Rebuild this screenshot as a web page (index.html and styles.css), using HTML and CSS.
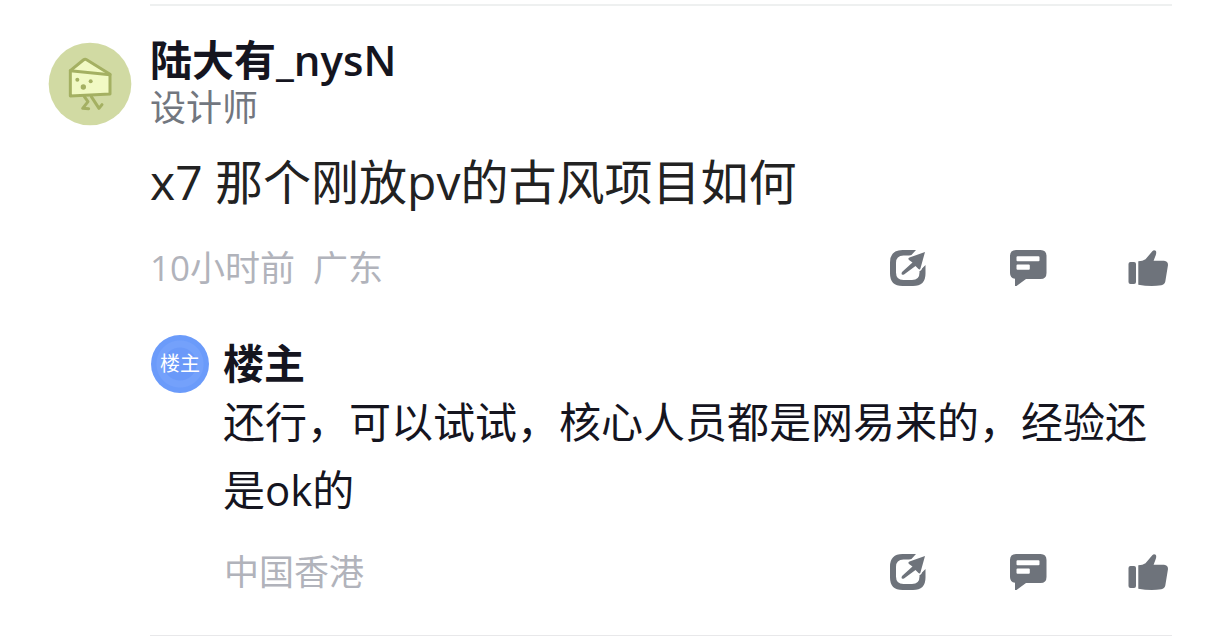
FILE: index.html
```
<!DOCTYPE html>
<html lang="zh-CN">
<head>
<meta charset="utf-8">
<meta name="viewport" content="width=device-width, initial-scale=1">
<title>评论</title>
<link rel="stylesheet" href="styles.css">
</head>
<body>

<!-- shared icons -->
<svg class="sprite" aria-hidden="true">
  <symbol id="icon-share" viewBox="0 0 40 40">
    <path d="M28 2 23 7.500H15.500Q8 7.500 8 15v9.500Q8 32 15.500 32H24q7.500 0 7.500-7.500V23l6-6v8.500Q37.500 38 25 38H14.500Q2 38 2 25.500V14.500Q2 2 14.500 2z" fill="currentColor"/>
    <path d="M37 4 21.500 9.500q-2 1-.5 2.500l3.500 2.500-10.500 9.500q-1.500 3.500 2 2.500l11.500-8.500 3 3q1.500 1.200 2-.8z" fill="currentColor" stroke="#fff" stroke-width="3" stroke-linejoin="round" paint-order="stroke"/>
  </symbol>
  <symbol id="icon-comment" viewBox="0 0 40 40">
    <path fill="currentColor" fill-rule="evenodd" d="M8 2h24.500q6 0 6 6v17q0 6-6 6H18l-9.500 7H7v-7.200Q2 30 2 25V8q0-6 6-6zm1.500 6.300q-1 0-1 1v3q0 1 1 1h21q1 0 1-1v-3q0-1-1-1zm0 8.200q-1 0-1 1v3.200q0 1 1 1h11.300q1 0 1-1v-3.200q0-1-1-1z"/>
  </symbol>
  <symbol id="icon-like" viewBox="0 0 40 40">
    <rect x="0.500" y="14" width="7.500" height="22" rx="2" fill="currentColor"/>
    <path fill="currentColor" d="M10.300 13.300q4.500 0 7.200-2l6.800-8Q26 1.300 27.700 2.800q1.300 1.700-.5 5.700l-1.600 4.200H36q4 .3 4 4.300L37.300 33.500q-.8 3.200-4 3.800-11 1.700-23-.6z"/>
  </symbol>
</svg>

<div class="comment">
  <svg class="avatar" viewBox="24 30 252 252" role="img" aria-label="陆大有_nysN">
    <circle cx="150" cy="156" r="124" fill="#d1daa3"/>
    <g stroke="#a4b062" stroke-width="9" stroke-linejoin="round" stroke-linecap="round">
      <path d="M91 116 130 84q5-4 10-1l70 44v59L91 192z" fill="#f1f9c4"/>
      <path d="M91 116l119 12" fill="none"/>
      <path d="M133 194l11 15-16 20 18 1M154 194l23 35 9-11" fill="none"/>
    </g>
    <g fill="#a4b062">
      <circle cx="112" cy="143" r="6"/>
      <circle cx="152" cy="148" r="6"/>
      <circle cx="130" cy="165" r="8"/>
    </g>
  </svg>
  <div class="comment-body">
    <div class="name">陆大有_nysN</div>
    <div class="job">设计师</div>
    <p class="text">x7 那个刚放pv的古风项目如何</p>
    <div class="meta">
      <span class="time">10小时前</span>
      <span class="place">广东</span>
      <div class="actions">
        <button type="button" aria-label="分享"><svg><use href="#icon-share"/></svg></button>
        <button type="button" aria-label="评论"><svg><use href="#icon-comment"/></svg></button>
        <button type="button" aria-label="点赞"><svg><use href="#icon-like"/></svg></button>
      </div>
    </div>

    <div class="reply">
      <div class="reply-avatar">楼主</div>
      <div class="reply-body">
        <div class="name reply-name">楼主</div>
        <p class="reply-text">还行，可以试试，核心人员都是网易来的，经验还是ok的</p>
      </div>
    </div>
    <div class="meta reply-meta">
      <span class="place">中国香港</span>
      <div class="actions">
        <button type="button" aria-label="分享"><svg><use href="#icon-share"/></svg></button>
        <button type="button" aria-label="评论"><svg><use href="#icon-comment"/></svg></button>
        <button type="button" aria-label="点赞"><svg><use href="#icon-like"/></svg></button>
      </div>
    </div>
  </div>
</div>

</body>
</html>
```
FILE: styles.css
```
* {
  box-sizing: border-box;
}

body {
  margin: 0;
  background-color: #fff;
  color: #15151f;
  font-family: "Open Sans", "Noto Sans CJK SC", sans-serif;
}

.sprite {
  display: none;
}

.comment {
  display: flex;
  gap: 18px;
  padding: 4px 48px 0;
}

.avatar {
  flex: none;
  width: 84px;
  height: 84px;
  margin-top: 38px;
}

.comment-body {
  flex: 1;
  min-width: 0;
  padding: 29px 0 43px;
  border-top: 2px solid #eef0f0;
  border-bottom: 1px solid #e8e8ea;
}

.name {
  font-size: 42px;
  font-weight: 600;
  line-height: 50px;
}

.job {
  margin-top: 3px;
  color: #72777f;
  font-size: 36px;
  line-height: 40px;
}

.text {
  margin: 20px 0 32px;
  color: #222;
  font-size: 48px;
  line-height: 68px;
}

.meta {
  display: flex;
  align-items: center;
  gap: 18px;
  padding-right: 4px;
  color: #b1b3bb;
  font-size: 35px;
  line-height: 40px;
}

.actions {
  display: flex;
  gap: 80px;
  margin-left: auto;
}

.actions button {
  width: 40px;
  height: 40px;
  padding: 0;
  border: none;
  background: none;
  color: #6e737b;
  cursor: pointer;
}

.actions svg {
  display: block;
  width: 40px;
  height: 40px;
}

/* reply */
.reply {
  display: flex;
  gap: 14px;
  margin-top: 47px;
  padding-left: 1px;
}

.reply-avatar {
  flex: none;
  width: 58px;
  height: 58px;
  border-radius: 50%;
  background: radial-gradient(circle, #6a99f9 0 16px, #74a1fb 17px 23px, #6b9bfa 24px);
  color: #fff;
  font-size: 20px;
  line-height: 58px;
  text-align: center;
}

.reply-body {
  flex: 1;
  min-width: 0;
  padding-top: 3px;
}

.reply-name {
  font-size: 41px;
}

.reply-text {
  margin: 0;
  font-size: 42px;
  line-height: 68px;
}

.reply-meta {
  margin-top: 28px;
  padding-left: 74px;
}
```
